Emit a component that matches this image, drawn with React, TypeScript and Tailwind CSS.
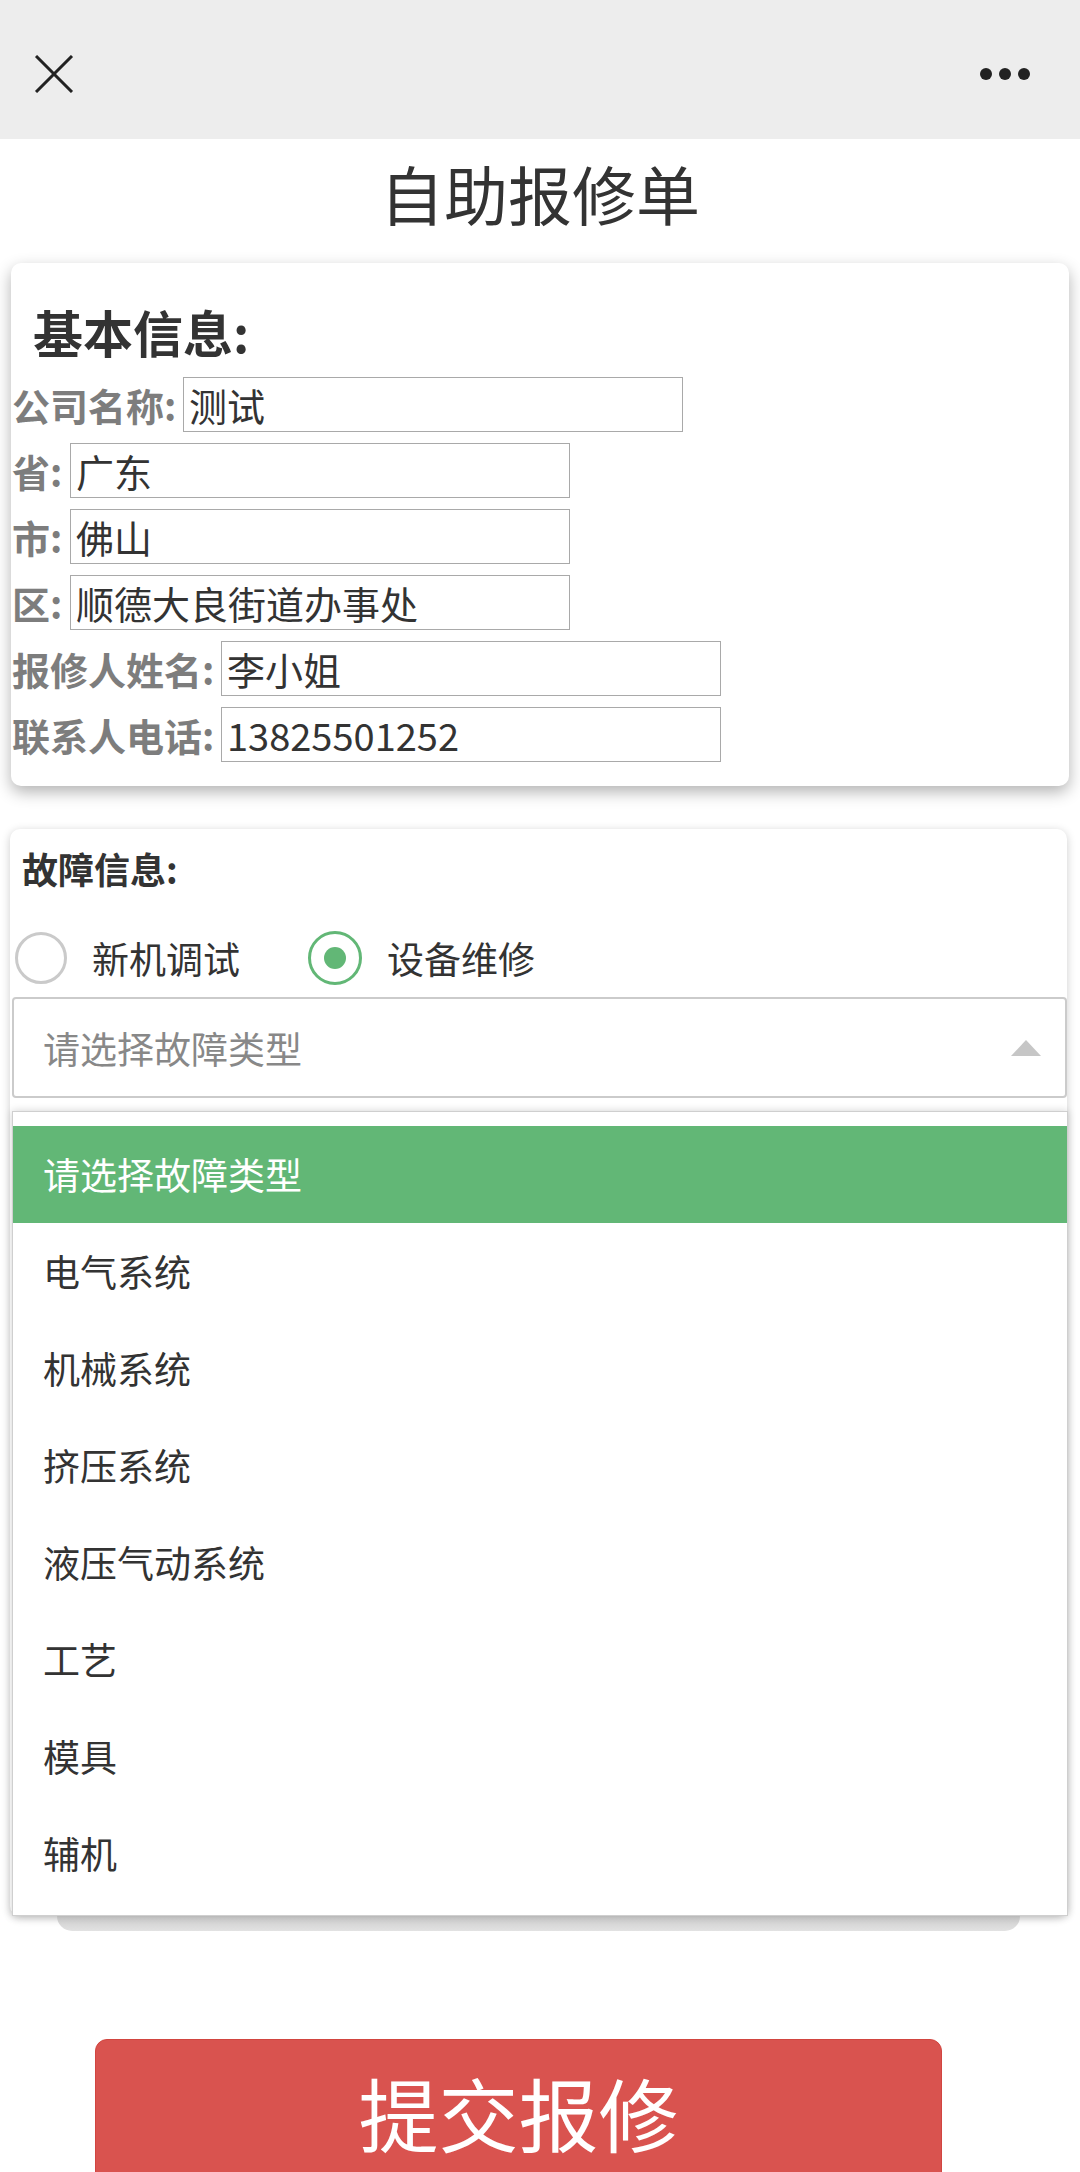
import React from "react";

const font = { fontFamily: '"Noto Sans CJK SC", "Noto Sans", sans-serif' };

function Row({ label, lw, value }: { label: string; lw: string; value: string }) {
  return (
    <div className="flex h-[55px] items-center">
      <span className={`${lw} shrink-0 whitespace-nowrap text-[38px] font-bold leading-[55px] text-[#7d7d7d]`}>{label}</span>
      <div className="flex h-[55px] w-[500px] items-center border-[1.5px] border-[#a9a9a9] bg-white pl-[5px] text-[38px] leading-[55px] text-[#333]">
        {value}
      </div>
    </div>
  );
}

const items = ["电气系统", "机械系统", "挤压系统", "液压气动系统", "工艺", "模具", "辅机"];

export default function App() {
  return (
    <div className="relative h-[2172px] w-[1080px] overflow-hidden bg-white" style={font}>
      {/* top bar */}
      <div className="flex h-[139px] items-start justify-between bg-[#ededed]">
        <div className="pl-[34px] pt-[55px]">
          <svg width="40" height="38" viewBox="0 0 40 38">
            <line x1="2" y1="1" x2="38" y2="37" stroke="#222" strokeWidth="3" />
            <line x1="38" y1="1" x2="2" y2="37" stroke="#222" strokeWidth="3" />
          </svg>
        </div>
        <div className="flex gap-[7px] pr-[50px] pt-[68px]">
          <div className="h-[12px] w-[12px] rounded-full bg-[#222]" />
          <div className="h-[12px] w-[12px] rounded-full bg-[#222]" />
          <div className="h-[12px] w-[12px] rounded-full bg-[#222]" />
        </div>
      </div>

      {/* title */}
      <div className="h-[124px] pt-[21px] text-center text-[64px] leading-[64px] text-[#333]">自助报修单</div>

      {/* card 1 */}
      <div className="ml-[11px] w-[1058px] rounded-[10px] bg-white pb-[24px] pl-[1px] shadow-[0_6px_16px_rgba(0,0,0,0.3)]">
        <div className="pl-[21px] pt-[43px] pb-[21px] text-[50px] font-bold leading-[50px] text-[#333]">基本信息:</div>
        <div className="flex flex-col gap-[11px]">
          <Row label="公司名称:" lw="w-[171px]" value="测试" />
          <Row label="省:" lw="w-[58px]" value="广东" />
          <Row label="市:" lw="w-[58px]" value="佛山" />
          <Row label="区:" lw="w-[58px]" value="顺德大良街道办事处" />
          <Row label="报修人姓名:" lw="w-[209px]" value="李小姐" />
          <Row label="联系人电话:" lw="w-[209px]" value="13825501252" />
        </div>
      </div>

      {/* card 2 */}
      <div className="relative ml-[10px] mt-[43px] h-[1087px] w-[1057px] rounded-[10px] bg-white shadow-[0_2px_10px_rgba(0,0,0,0.2)]">
        <div className="pl-[12px] pt-[21px] text-[36px] font-bold leading-[36px] text-[#333]">故障信息:</div>
        <div className="mt-[46px] flex h-[52px] items-center pl-[5px]">
          <div className="h-[52px] w-[52px] rounded-full border-[3px] border-[#cacaca]" />
          <span className="ml-[25px] text-[37px] leading-[52px] text-[#333]">新机调试</span>
          <div className="ml-[68px] flex h-[54px] w-[54px] items-center justify-center rounded-full border-[3px] border-[#62b776]">
            <div className="h-[22px] w-[22px] rounded-full bg-[#62b776]" />
          </div>
          <span className="ml-[25px] text-[37px] leading-[52px] text-[#333]">设备维修</span>
        </div>
        <div className="ml-[2px] mt-[13px] flex h-[101px] w-[1055px] items-center justify-between rounded-[4px] border-2 border-[#cbcbcb] pl-[29px] pr-[24px]">
          <span className="text-[37px] leading-[40px] text-[#888]">请选择故障类型</span>
          <div className="h-0 w-0 border-b-[16px] border-l-[15px] border-r-[15px] border-b-[#c6c6c6] border-l-transparent border-r-transparent" />
        </div>

        {/* shadow band */}
        <div className="absolute left-[47px] top-[1087px] h-[15px] w-[963px] rounded-b-[16px] bg-linear-to-b from-[#cbcbcb] to-[#e2e2e2]" />

        {/* dropdown */}
        <div className="absolute left-[2px] top-[282px] h-[805px] w-[1056px] border border-[#cfcfcf] bg-white pt-[14px] shadow-[0_0_8px_rgba(0,0,0,0.18)]">
          <div className="flex h-[97px] items-center bg-[#62b776] pl-[30px] text-[37px] text-white">请选择故障类型</div>
          {items.map((t) => (
            <div key={t} className="flex h-[97px] items-center pl-[30px] text-[37px] text-[#333]">
              {t}
            </div>
          ))}
        </div>
      </div>

      {/* submit */}
      <div className="ml-[95px] mt-[123px] h-[160px] w-[847px] rounded-[12px] border border-[#d14540] bg-[#d9534f] pt-[31px] text-center text-[80px] leading-[80px] text-white">
        提交报修
      </div>
    </div>
  );
}
